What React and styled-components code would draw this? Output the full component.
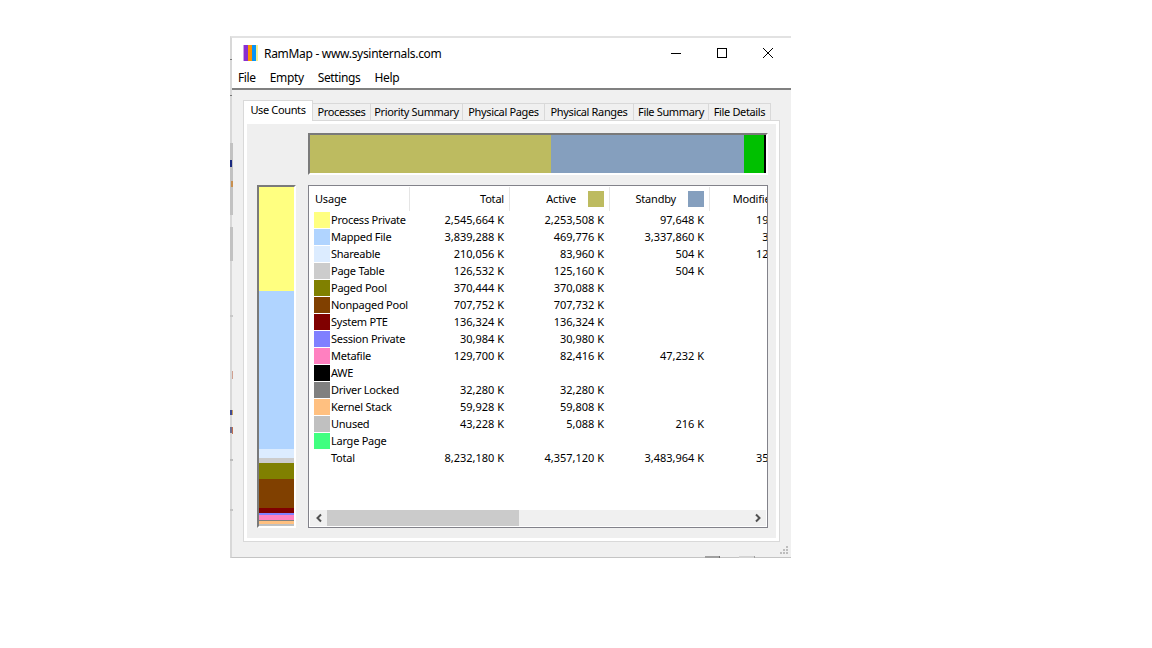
import React from "react";
import styled, {createGlobalStyle} from "styled-components";

const GlobalStyle = createGlobalStyle`
  html, body {
    margin: 0;
    padding: 0;
    background: #ffffff;
  }
  body {
    font-family: "Noto Sans", "Open Sans", sans-serif;
    font-size: 11px;
    letter-spacing: -0.2px;
    color: #000000;
  }
`

const Page = styled.div`
  width: 1152px;
  height: 648px;
  padding: 36px 0 0 230px;
  box-sizing: border-box;
  overflow: hidden;
`

const Window = styled.div`
  position: relative;
  width: 561px;
  height: 522px;
  box-sizing: border-box;
  border-top: 2px solid #e2e2e2;
  border-left: 2px solid #d8d8d8;
  border-bottom: 1px solid #c4c4c4;
  display: flex;
  flex-direction: column;
  background: #f0f0f0;
`

const EdgeMarks = styled.svg`
  position: absolute;
  left: -2px;
  top: -2px;
`

const BottomMarks = styled.svg`
  position: absolute;
  left: 473px;
  bottom: -1px;
`

const TitleBar = styled.div`
  height: 30px;
  background: #ffffff;
  display: flex;
  align-items: center;
  padding-left: 11px;
  font-size: 12px;
  letter-spacing: -0.3px;
  flex: none;
`

const TitleText = styled.div`
  flex: 1;
  margin-left: 6px;
`

const WinButtons = styled.div`
  display: flex;
`

const WinButton = styled.div`
  width: 46px;
  height: 30px;
  display: flex;
  align-items: center;
  justify-content: center;
`

const MenuBar = styled.div`
  height: 20px;
  flex: none;
  background: #ffffff;
  border-bottom: 2px solid #808080;
  display: flex;
  padding-left: 6px;
  gap: 14px;
  font-size: 12px;
  letter-spacing: -0.36px;
  line-height: 20px;
`

const Body = styled.div`
  flex: 1;
  display: flex;
  flex-direction: column;
  padding: 10px 0 0 11px;
  min-height: 0;
`

const TabRow = styled.div`
  display: flex;
  align-items: flex-end;
  height: 21px;
  flex: none;
  position: relative;
  z-index: 1;
`

const Tab = styled.div`
  width: ${p => p.$w}px;
  box-sizing: border-box;
  height: ${p => p.$active ? 21 : 18}px;
  background: ${p => p.$active ? "#ffffff" : "#f0f0f0"};
  border: 1px solid #d9d9d9;
  border-left: ${p => p.$active ? "1px solid #d9d9d9" : "none"};
  border-bottom: ${p => p.$active ? "none" : "1px solid #d9d9d9"};
  text-align: center;
  line-height: ${p => p.$active ? 18 : 16}px;
  letter-spacing: -0.36px;
  white-space: nowrap;
`

const TabPanel = styled.div`
  width: 537px;
  height: 422px;
  box-sizing: border-box;
  flex: none;
  margin-top: -1px;
  background: #efefef;
  border: 1px solid #d9d9d9;
  outline: 3px solid #ffffff;
  outline-offset: -4px;
  padding: 12px 11px 0 13px;
  display: grid;
  grid-template-columns: 39px 460px;
  grid-template-rows: 42px 343px;
  column-gap: 12px;
  row-gap: 10px;
`

const TopBar = styled.div`
  grid-column: 2;
  display: flex;
  box-sizing: border-box;
  border-top: 2px solid #7a7a7a;
  border-left: 2px solid #7a7a7a;
  border-right: 2px solid #ffffff;
  border-bottom: 2px solid #ffffff;
  width: 460px;
`

const SideBar = styled.div`
  display: flex;
  flex-direction: column;
  box-sizing: border-box;
  border-top: 2px solid #7a7a7a;
  border-left: 2px solid #7a7a7a;
  border-right: 2px solid #ffffff;
  border-bottom: 2px solid #ffffff;
`

const Segment = styled.div`
  flex: none;
  background: ${p => p.$color};
  width: ${p => p.$w ? p.$w + "px" : "auto"};
  height: ${p => p.$h ? p.$h + "px" : "auto"};
`

const ListPanel = styled.div`
  background: #ffffff;
  box-sizing: border-box;
  border: 1px solid #82828a;
  padding: 1px 0 0 1px;
  display: flex;
  flex-direction: column;
  overflow: hidden;
`

const Scroller = styled.div`
  flex: 1;
  overflow: hidden;
  min-height: 0;
`

const Header = styled.div`
  display: flex;
  height: 24px;
  width: 500px;
`

const HeadCell = styled.div`
  width: 100px;
  flex: none;
  box-sizing: border-box;
  border-right: ${p => p.$last ? "none" : "1px solid #e5e5e5"};
  display: flex;
  align-items: center;
  justify-content: ${p => p.$first ? "flex-start" : "flex-end"};
  padding: 0 5px;
  gap: 12px;
  white-space: nowrap;
`

const HeadLabel = styled.span`
  margin-bottom: 2px;
`

const HeadSwatch = styled.div`
  width: 16px;
  height: 16px;
  flex: none;
  background: ${p => p.$color};
`

const Row = styled.div`
  display: flex;
  height: 17px;
  width: 500px;
  align-items: center;
  white-space: nowrap;
`

const NameCell = styled.div`
  width: 100px;
  box-sizing: border-box;
  flex: none;
  display: flex;
  align-items: center;
  padding-left: 4px;
  gap: 1px;
  letter-spacing: -0.25px;
`

const Swatch = styled.div`
  width: 16px;
  height: 16px;
  flex: none;
  background: ${p => p.$color || "transparent"};
`

const NumCell = styled.div`
  width: 100px;
  box-sizing: border-box;
  flex: none;
  text-align: right;
  letter-spacing: 0;
  padding-right: ${p => p.$clipped ? 10 : 6}px;
`

const ScrollBar = styled.div`
  height: 16px;
  flex: none;
  margin: 0 1px 1px 0;
  background: #f0f0f0;
  display: flex;
  align-items: stretch;
`

const ScrollArrow = styled.div`
  width: 17px;
  flex: none;
  display: flex;
  align-items: center;
  justify-content: center;
`

const ScrollTrack = styled.div`
  flex: 1;
  display: flex;
`

const ScrollThumb = styled.div`
  width: 192px;
  background: #cbcbcb;
`

const StatusBar = styled.div`
  flex: 1;
  display: flex;
  justify-content: flex-end;
  align-items: flex-end;
  padding: 0 2px 2px 0;
`

const colors = {
    active: "#bdbb60",
    standby: "#859fbe",
}

const rows = [
    {name: "Process Private", color: "#ffff80", vals: ["2,545,664 K", "2,253,508 K", "97,648 K", "19,488 K"]},
    {name: "Mapped File", color: "#b0d4ff", vals: ["3,839,288 K", "469,776 K", "3,337,860 K", "3,652 K"]},
    {name: "Shareable", color: "#dcecff", vals: ["210,056 K", "83,960 K", "504 K", "12,588 K"]},
    {name: "Page Table", color: "#cccccc", vals: ["126,532 K", "125,160 K", "504 K", ""]},
    {name: "Paged Pool", color: "#808000", vals: ["370,444 K", "370,088 K", "", ""]},
    {name: "Nonpaged Pool", color: "#804000", vals: ["707,752 K", "707,732 K", "", ""]},
    {name: "System PTE", color: "#800000", vals: ["136,324 K", "136,324 K", "", ""]},
    {name: "Session Private", color: "#8080ff", vals: ["30,984 K", "30,980 K", "", ""]},
    {name: "Metafile", color: "#ff80c0", vals: ["129,700 K", "82,416 K", "47,232 K", ""]},
    {name: "AWE", color: "#000000", vals: ["", "", "", ""]},
    {name: "Driver Locked", color: "#808080", vals: ["32,280 K", "32,280 K", "", ""]},
    {name: "Kernel Stack", color: "#ffc080", vals: ["59,928 K", "59,808 K", "", ""]},
    {name: "Unused", color: "#c0c0c0", vals: ["43,228 K", "5,088 K", "216 K", ""]},
    {name: "Large Page", color: "#40ff80", vals: ["", "", "", ""]},
    {name: "Total", vals: ["8,232,180 K", "4,357,120 K", "3,483,964 K", "35,728 K"]},
]

const tabs = [
    ["Use Counts", 70],
    ["Processes", 58],
    ["Priority Summary", 92],
    ["Physical Pages", 82],
    ["Physical Ranges", 89],
    ["File Summary", 75],
    ["File Details", 62],
]

const sideSegments = [
    ["#ffff80", 104],
    ["#b0d4ff", 158],
    ["#dcecff", 9],
    ["#cccccc", 5],
    ["#808000", 16],
    ["#804000", 29],
    ["#800000", 5],
    ["#8080ff", 2],
    ["#ff80c0", 5],
    ["#808080", 1],
    ["#ffc080", 3],
    ["#c0c0c0", 2],
]

// bits of the desktop showing along the window's left edge
const edgeMarks = [
    [0, 23, 2, 1, "#777777"],
    [0, 59, 2, 1, "#777777"],
    [0, 107, 3, 72, "#c2c2c2"],
    [0, 124, 2, 7, "#1a2a80"],
    [1, 145, 2, 6, "#c89050"],
    [0, 191, 3, 34, "#c2c2c2"],
    [0, 279, 3, 2, "#c8c8c8"],
    [2, 335, 1, 8, "#d0a090"],
    [0, 374, 2, 5, "#404a90"],
    [2, 374, 1, 5, "#c8a060"],
    [0, 391, 2, 6, "#707090"],
    [2, 391, 1, 7, "#c07050"],
    [0, 423, 3, 2, "#bcbcbc"],
    [0, 473, 3, 2, "#c4c4c4"],
]

function AppIcon() {
    return (
        <svg width="15" height="16" viewBox="0 0 15 16">
            <rect x="0" y="0" width="1" height="16" fill="#c9a0ea"/>
            <rect x="1" y="0" width="4" height="16" fill="#8a2fd0"/>
            <rect x="5" y="0" width="4" height="16" fill="#ff9400"/>
            <rect x="9" y="0" width="4" height="16" fill="#0a94f5"/>
            <rect x="13" y="0" width="2" height="16" fill="#f6f090"/>
        </svg>
    )
}

function App() {
    return (
        <Page>
            <GlobalStyle/>
            <Window>
                <EdgeMarks width="3" height="500" viewBox="0 0 3 500">
                    {edgeMarks.map(([x, y, w, h, fill], i) => (
                        <rect key={i} x={x} y={y} width={w} height={h} fill={fill}/>
                    ))}
                </EdgeMarks>
                <BottomMarks width="52" height="2" viewBox="0 0 52 2">
                    <rect x="0" y="0" width="14" height="2" fill="#a0a0a0"/>
                    <rect x="14" y="0" width="1" height="2" fill="#707070"/>
                    <rect x="34" y="0" width="15" height="2" fill="#d4d4d4"/>
                    <rect x="49" y="0" width="1" height="2" fill="#a0a0a0"/>
                </BottomMarks>
                <TitleBar>
                    <AppIcon/>
                    <TitleText>RamMap - www.sysinternals.com</TitleText>
                    <WinButtons>
                        <WinButton>
                            <svg width="12" height="12" viewBox="0 0 12 12"><path d="M1 6.5h10" stroke="#000" fill="none"/></svg>
                        </WinButton>
                        <WinButton>
                            <svg width="12" height="12" viewBox="0 0 12 12"><rect x="1.5" y="1.5" width="9" height="9" stroke="#000" fill="none"/></svg>
                        </WinButton>
                        <WinButton>
                            <svg width="12" height="12" viewBox="0 0 12 12"><path d="M1 1l10 10M11 1L1 11" stroke="#000" fill="none"/></svg>
                        </WinButton>
                    </WinButtons>
                </TitleBar>
                <MenuBar>
                    <span>File</span>
                    <span>Empty</span>
                    <span>Settings</span>
                    <span>Help</span>
                </MenuBar>
                <Body>
                    <TabRow>
                        {tabs.map(([label, w], i) => (
                            <Tab key={label} $w={w} $active={i === 0}>{label}</Tab>
                        ))}
                    </TabRow>
                    <TabPanel>
                        <TopBar>
                            <Segment $color="#bdbb60" $w={241}/>
                            <Segment $color="#859fbe" $w={193}/>
                            <Segment $color="#00c000" $w={20}/>
                            <Segment $color="#000000" $w={2}/>
                        </TopBar>
                        <SideBar>
                            {sideSegments.map(([color, h], i) => (
                                <Segment key={i} $color={color} $h={h}/>
                            ))}
                        </SideBar>
                        <ListPanel>
                            <Scroller>
                                <Header>
                                    <HeadCell $first><HeadLabel>Usage</HeadLabel></HeadCell>
                                    <HeadCell><HeadLabel>Total</HeadLabel></HeadCell>
                                    <HeadCell><HeadLabel>Active</HeadLabel><HeadSwatch $color={colors.active}/></HeadCell>
                                    <HeadCell><HeadLabel>Standby</HeadLabel><HeadSwatch $color={colors.standby}/></HeadCell>
                                    <HeadCell $last><HeadLabel>Modified</HeadLabel><HeadSwatch $color="#00c000"/></HeadCell>
                                </Header>
                                {rows.map(row => (
                                    <Row key={row.name}>
                                        <NameCell>
                                            <Swatch $color={row.color}/>
                                            {row.name}
                                        </NameCell>
                                        {row.vals.map((v, i) => <NumCell key={i} $clipped={i === 3}>{v}</NumCell>)}
                                    </Row>
                                ))}
                            </Scroller>
                            <ScrollBar>
                                <ScrollArrow>
                                    <svg width="8" height="10" viewBox="0 0 8 10"><path d="M6 1.5L2.5 5 6 8.5" stroke="#505050" strokeWidth="2" fill="none"/></svg>
                                </ScrollArrow>
                                <ScrollTrack><ScrollThumb/></ScrollTrack>
                                <ScrollArrow>
                                    <svg width="8" height="10" viewBox="0 0 8 10"><path d="M2 1.5L5.5 5 2 8.5" stroke="#505050" strokeWidth="2" fill="none"/></svg>
                                </ScrollArrow>
                            </ScrollBar>
                        </ListPanel>
                    </TabPanel>
                    <StatusBar>
                        <svg width="9" height="9" viewBox="0 0 9 9" fill="#bdbdbd">
                            <rect x="6" y="0" width="2" height="2"/>
                            <rect x="3" y="3" width="2" height="2"/>
                            <rect x="6" y="3" width="2" height="2"/>
                            <rect x="0" y="6" width="2" height="2"/>
                            <rect x="3" y="6" width="2" height="2"/>
                            <rect x="6" y="6" width="2" height="2"/>
                        </svg>
                    </StatusBar>
                </Body>
            </Window>
        </Page>
    )
}

export default App;
